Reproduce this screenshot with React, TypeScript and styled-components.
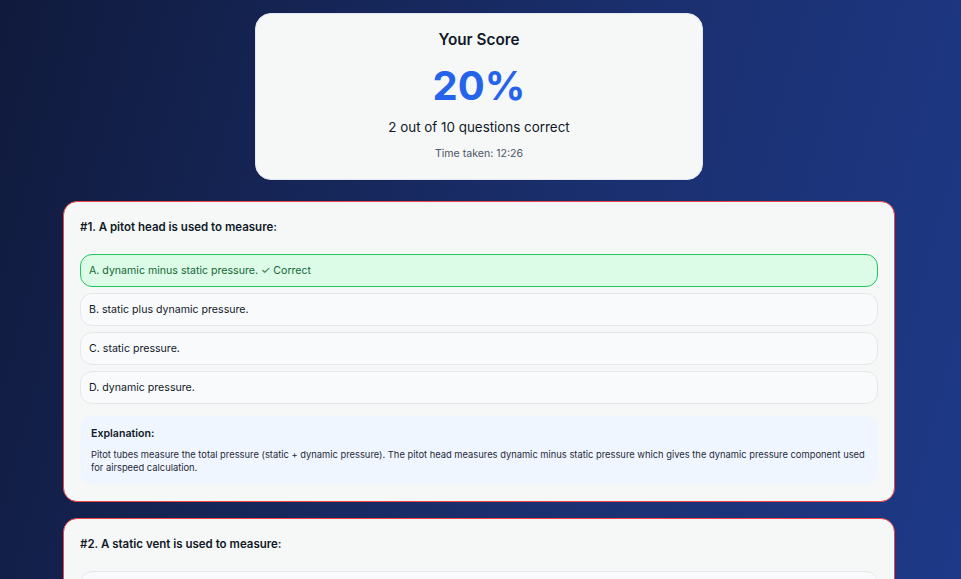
import React from "react";
import styled, { createGlobalStyle } from "styled-components";

const Global = createGlobalStyle`
  html, body { margin: 0; padding: 0; }
  body {
    font-family: Inter, "Noto Sans", "Liberation Sans", sans-serif;
    background: #141f48;
  }
`;

const Page = styled.div`
  min-height: 100vh;
  box-sizing: border-box;
  padding: 13px 3px 24px 0;
  background: linear-gradient(105deg, #101a3c 0%, #1a2f6e 55%, #1e3a8a 100%);
  display: flex;
  flex-direction: column;
  align-items: center;
  gap: 21px;
`;

const ScoreCard = styled.section`
  width: 448px;
  box-sizing: border-box;
  background: #f6f8f8;
  border: 1px solid #e2e8f0;
  border-radius: 16px;
  padding: 16px 24px 17px;
  display: flex;
  flex-direction: column;
  align-items: center;
  color: #111827;
`;

const ScoreTitle = styled.h2`
  margin: 0;
  font-size: 15.3px;
  font-weight: 600;
  line-height: 20px;
`;

const ScoreValue = styled.div`
  margin-top: 12px;
  font-size: 40px;
  font-weight: 700;
  line-height: 48px;
  color: #2563eb;
`;

const ScoreDetail = styled.p`
  margin: 8px 0 0;
  font-size: 13.4px;
  line-height: 18px;
  color: #111827;
`;

const TimeTaken = styled.p`
  margin: 10px 0 0;
  font-size: 10.6px;
  line-height: 16px;
  color: #4b5563;
`;

const List = styled.div`
  width: 832px;
  display: flex;
  flex-direction: column;
  gap: 16px;
`;

const QuestionCard = styled.article`
  box-sizing: border-box;
  background: #f6f8f8;
  border: 1px solid #ef4444;
  border-radius: 14px;
  padding: 16px 16px 17px;
`;

const QuestionTitle = styled.h3`
  margin: 0 0 18px;
  font-size: 11.5px;
  font-weight: 600;
  line-height: 18px;
  color: #111827;
`;

const Options = styled.div`
  display: flex;
  flex-direction: column;
  gap: 6px;
`;

const Option = styled.div<{ $correct?: boolean }>`
  box-sizing: border-box;
  height: 33px;
  display: flex;
  align-items: center;
  padding: 0 8px;
  border-radius: 12px;
  font-size: 10.6px;
  border: 1px solid ${(p) => (p.$correct ? "#22c55e" : "#e5e7eb")};
  background: ${(p) => (p.$correct ? "#dcfce7" : "#f8fafc")};
  color: ${(p) => (p.$correct ? "#166534" : "#111827")};
`;

const Explanation = styled.div`
  margin-top: 12px;
  background: #eff6ff;
  border-radius: 12px;
  padding: 10px 11px 10px;
  color: #1f2937;
`;

const ExplanationTitle = styled.div`
  font-size: 10.6px;
  font-weight: 600;
  line-height: 16px;
  color: #111827;
`;

const ExplanationText = styled.p`
  margin: 6px 0 0;
  font-size: 9.35px;
  line-height: 13px;
  color: #1f2937;
`;

type Q = {
  n: number;
  title: string;
  options: string[];
  correct: number;
  explanation?: string;
};

const questions: Q[] = [
  {
    n: 1,
    title: "A pitot head is used to measure:",
    options: [
      "dynamic minus static pressure.",
      "static plus dynamic pressure.",
      "static pressure.",
      "dynamic pressure.",
    ],
    correct: 0,
    explanation:
      "Pitot tubes measure the total pressure (static + dynamic pressure). The pitot head measures dynamic minus static pressure which gives the dynamic pressure component used for airspeed calculation.",
  },
  {
    n: 2,
    title: "A static vent is used to measure:",
    options: [
      "static pressure.",
      "dynamic pressure.",
      "total pressure.",
      "dynamic minus static pressure.",
    ],
    correct: -1,
  },
];

const letters = ["A", "B", "C", "D"];

export default function App() {
  return (
    <>
      <Global />
      <Page>
        <ScoreCard>
          <ScoreTitle>Your Score</ScoreTitle>
          <ScoreValue>20%</ScoreValue>
          <ScoreDetail>2 out of 10 questions correct</ScoreDetail>
          <TimeTaken>Time taken: 12:26</TimeTaken>
        </ScoreCard>
        <List>
          {questions.map((q) => (
            <QuestionCard key={q.n}>
              <QuestionTitle>
                #{q.n}. {q.title}
              </QuestionTitle>
              <Options>
                {q.options.map((o, i) => (
                  <Option key={i} $correct={i === q.correct}>
                    {letters[i]}. {o}
                    {i === q.correct ? " \u2713 Correct" : ""}
                  </Option>
                ))}
              </Options>
              {q.explanation && (
                <Explanation>
                  <ExplanationTitle>Explanation:</ExplanationTitle>
                  <ExplanationText>{q.explanation}</ExplanationText>
                </Explanation>
              )}
            </QuestionCard>
          ))}
        </List>
      </Page>
    </>
  );
}
